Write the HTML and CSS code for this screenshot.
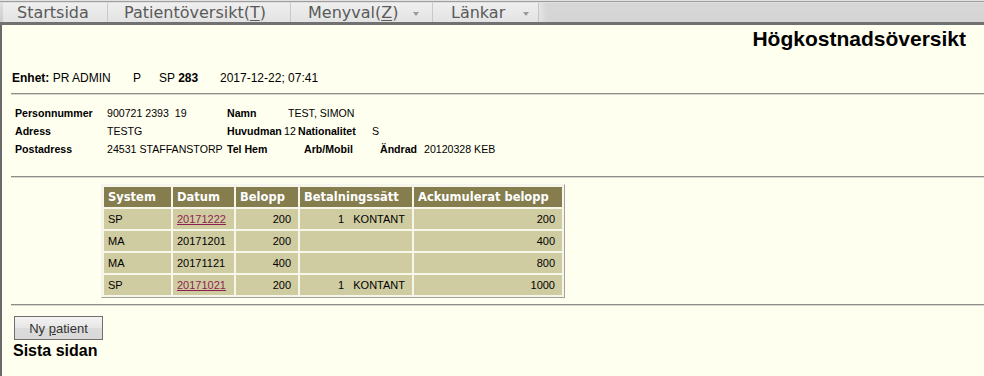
FILE: index.html
```html
<!DOCTYPE html>
<html lang="sv">
<head>
<meta charset="utf-8">
<title>Högkostnadsöversikt</title>
<link rel="stylesheet" href="styles.css">
</head>
<body>
<nav class="menubar">
  <div class="menu-items">
    <span class="mi mi-start">Startsida</span>
    <span class="mi mi-patient">Patientöversikt(<u>T</u>)</span>
    <span class="mi mi-meny">Menyval(<u>Z</u>)<i class="caret caret-meny"></i></span>
    <span class="mi mi-lankar">Länkar<i class="caret caret-lankar"></i></span>
  </div>
  <div class="menu-rest"></div>
</nav>
<main class="page">
  <h1 class="title">Högkostnadsöversikt</h1>
  <div class="unit-line">
    <span class="u1"><b>Enhet:</b> PR ADMIN</span>
    <span class="u2">P</span>
    <span class="u3">SP <b>283</b></span>
    <span class="u4">2017-12-22; 07:41</span>
  </div>
  <hr class="rule rule-1">
  <div class="info">
    <div class="info-row">
      <span class="lab w-a">Personnummer</span>
      <span class="w-b">900721 2393&nbsp;&nbsp;19</span>
      <span class="lab w-namn">Namn</span>
      <span>TEST, SIMON</span>
    </div>
    <div class="info-row">
      <span class="lab w-a">Adress</span>
      <span class="w-b">TESTG</span>
      <span class="lab w-huv">Huvudman</span>
      <span class="w-12">12</span>
      <span class="lab w-nat">Nationalitet</span>
      <span>S</span>
    </div>
    <div class="info-row">
      <span class="lab w-a">Postadress</span>
      <span class="w-b">24531 STAFFANSTORP</span>
      <span class="lab w-tel">Tel Hem</span>
      <span class="lab w-arb">Arb/Mobil</span>
      <span class="lab w-and">Ändrad</span>
      <span>20120328 KEB</span>
    </div>
  </div>
  <hr class="rule rule-2">
  <table class="cost">
    <thead>
      <tr>
        <th class="c-sys">System</th>
        <th class="c-dat">Datum</th>
        <th class="c-bel">Belopp</th>
        <th class="c-bet">Betalningssätt</th>
        <th class="c-ack">Ackumulerat belopp</th>
      </tr>
    </thead>
    <tbody>
      <tr>
        <td>SP</td>
        <td><a href="#">20171222</a></td>
        <td class="num">200</td>
        <td class="num">1&nbsp;&nbsp;&nbsp;KONTANT</td>
        <td class="num">200</td>
      </tr>
      <tr>
        <td>MA</td>
        <td>20171201</td>
        <td class="num">200</td>
        <td class="num"></td>
        <td class="num">400</td>
      </tr>
      <tr>
        <td>MA</td>
        <td>20171121</td>
        <td class="num">400</td>
        <td class="num"></td>
        <td class="num">800</td>
      </tr>
      <tr>
        <td>SP</td>
        <td><a href="#">20171021</a></td>
        <td class="num">200</td>
        <td class="num">1&nbsp;&nbsp;&nbsp;KONTANT</td>
        <td class="num">1000</td>
      </tr>
    </tbody>
  </table>
  <hr class="rule rule-3">
  <button class="btn" type="button">Ny <u>p</u>atient</button>
  <div class="last">Sista sidan</div>
</main>
</body>
</html>
```

FILE: styles.css
```css
html, body {
  margin: 0;
  padding: 0;
  background: #ffffef;
  height: 100%;
}
body {
  font-family: "Liberation Sans", Arial, sans-serif;
  font-size: 12px;
  color: #000;
  display: flex;
  flex-direction: column;
}

/* ---------- menu bar ---------- */
.menubar {
  height: 25px;
  box-sizing: border-box;
  display: flex;
  padding: 3px 0 3px 3px;
  background: linear-gradient(to bottom,
    #e2e2e2 0, #e2e2e2 1px,
    #9e9e9e 1px, #9e9e9e 2px,
    #e0e0e0 2px, #cdcdcd 22px,
    #717171 22px, #717171 25px);
  font-family: "DejaVu Sans", Verdana, sans-serif;
  font-size: 16px;
  color: #5a5a5a;
}
.menu-items {
  display: flex;
  background: linear-gradient(to bottom, #efefef, #e3e3e3);
}
.menu-rest {
  flex: 1;
  border-left: 1px solid #c4c4c4;
  background: linear-gradient(to right, #e6e6e6 0, #d6d6d6 8px, #d6d6d6 100%);
  opacity: 0.9;
}
.mi {
  display: flex;
  align-items: center;
  height: 19px;
  box-sizing: border-box;
  border-right: 1px solid #c9c9c9;
  white-space: nowrap;
  line-height: 19px;
}
.mi u { text-decoration-thickness: 1px; text-underline-offset: 2px; }
.mi-start { width: 105px; padding-left: 14px; }
.mi-patient { width: 183px; padding-left: 16px; }
.mi-meny { width: 142px; padding-left: 17px; }
.mi-lankar { width: 105px; padding-left: 18px; border-right: none; }
.caret {
  display: inline-block;
  width: 0;
  height: 0;
  border-left: 3px solid transparent;
  border-right: 3px solid transparent;
  border-top: 4px solid #9a9a9a;
  margin-top: 2px;
}
.caret-meny { margin-left: 15px; }
.caret-lankar { margin-left: 18px; }

/* ---------- page ---------- */
.page {
  flex: 1;
  border-left: 2px solid #6a6a6a;
  padding-left: 9px;
}
.title {
  margin: 2px 0 0 0;
  padding-right: 18px;
  text-align: right;
  font-size: 21px;
  line-height: 24px;
  font-weight: bold;
}
.unit-line {
  margin-top: 20px;
  display: flex;
  line-height: 14px;
  padding-left: 1px;
}
.u1 { width: 121px; }
.u2 { width: 26px; }
.u3 { width: 61px; }

.rule {
  margin: 0;
  height: 0;
  border: none;
  border-top: 1px solid #8f8f8a;
  border-bottom: 1px solid #d8d8d0;
}
.rule-1 { margin-top: 8px; }
.rule-2 { margin-top: 18px; }
.rule-3 { margin-top: 6px; }

.info {
  margin-top: 9px;
  padding-left: 4px;
  font-size: 10.6px;
}
.info-row {
  display: flex;
  height: 18px;
  line-height: 18px;
  white-space: nowrap;
}
.lab { font-weight: bold; }
.w-a { width: 92px; }
.w-b { width: 120px; }
.w-namn { width: 61px; }
.w-huv { width: 57px; }
.w-12 { width: 14px; }
.w-nat { width: 74px; }
.w-tel { width: 77px; }
.w-arb { width: 76px; }
.w-and { width: 44px; }

/* ---------- cost table ---------- */
.cost {
  margin: 6px 0 0 90px;
  border-collapse: separate;
  border-spacing: 2px;
  border: 1px solid;
  border-color: #f4f4ea #a3a39a #a3a39a #f4f4ea;
  background: #f6f6ea;
  font-size: 11px;
}
.cost th {
  background: #857d4d;
  color: #fff;
  font-family: "DejaVu Sans", Verdana, sans-serif;
  font-size: 11.5px;
  font-weight: bold;
  text-align: left;
  height: 20px;
  padding: 0 4px;
  box-sizing: border-box;
  white-space: nowrap;
}
.cost td {
  background: #d0cca2;
  height: 20px;
  padding: 0 7px 0 4px;
  box-sizing: border-box;
  white-space: nowrap;
}
.cost td.num { text-align: right; }
.c-sys { width: 67px; }
.c-dat { width: 61px; }
.c-bel { width: 62px; }
.c-bet { width: 112px; }
.c-ack { width: 148px; }
.cost a { color: #8c1e50; }

/* ---------- footer ---------- */
.btn {
  display: block;
  margin: 10px 0 0 3px;
  width: 89px;
  height: 24px;
  padding: 0;
  border: 1px solid #707070;
  border-radius: 0;
  background: linear-gradient(to bottom, #f3f3f3, #e6e6e6 50%, #dcdcdc 51%, #d8d8d8);
  font-family: "Liberation Sans", Arial, sans-serif;
  font-size: 13px;
  color: #333;
}
.btn u { text-underline-offset: 1px; }
.last {
  margin-top: 2px;
  padding-left: 2px;
  font-size: 16px;
  line-height: 18px;
  font-weight: bold;
}
```
